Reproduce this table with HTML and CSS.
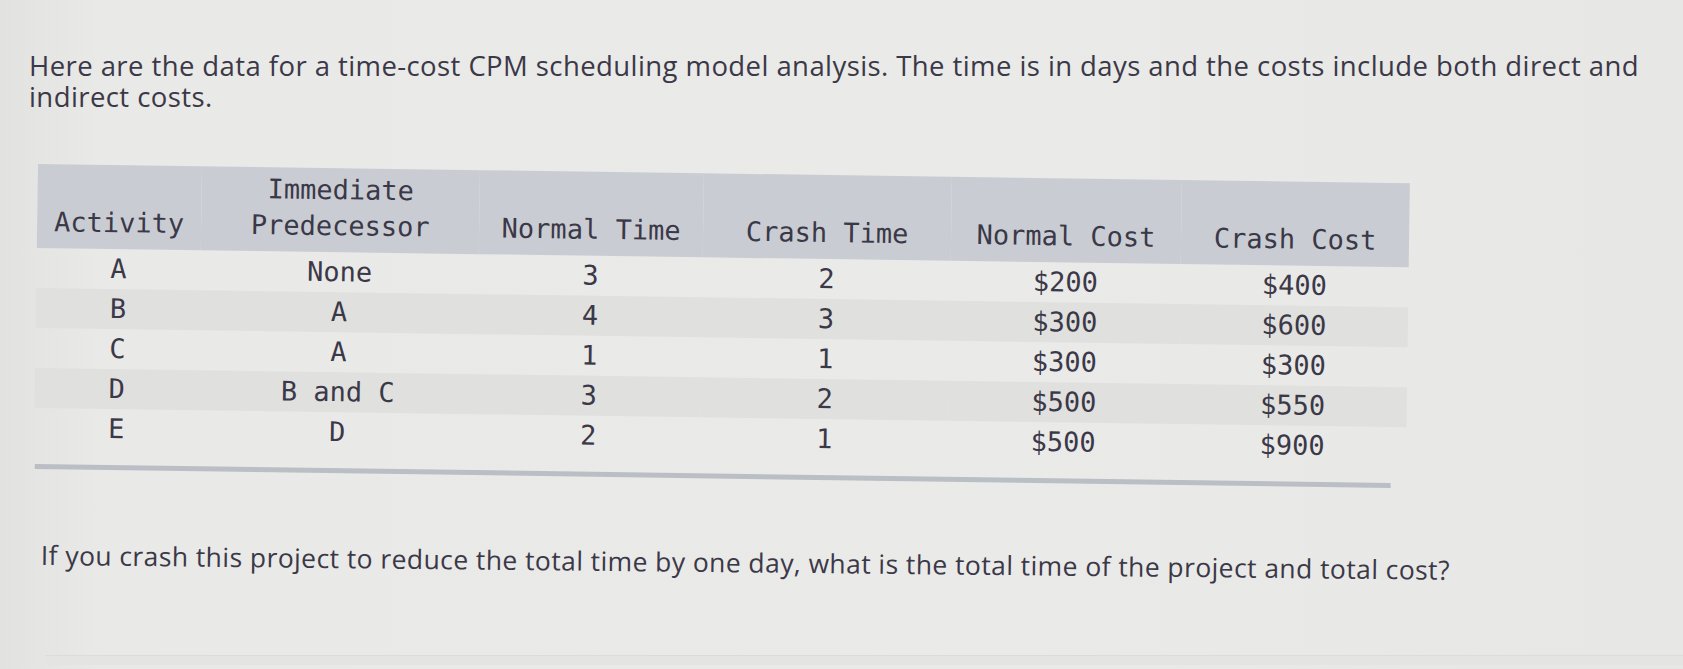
FILE: index.html
```html
<!DOCTYPE html>
<html lang="en">
<head>
<meta charset="utf-8">
<title>Time-cost CPM scheduling</title>
<link rel="stylesheet" href="styles.css">
</head>
<body>
<main class="page">
  <p class="intro">Here are the data for a time-cost CPM scheduling model analysis. The time is in days and the costs include both direct and indirect costs.</p>

  <section class="table-wrap">
    <table class="cpm">
      <colgroup>
        <col class="c1"><col class="c2"><col class="c3"><col class="c4"><col class="c5"><col class="c6">
      </colgroup>
      <thead>
        <tr>
          <th>Activity</th>
          <th>Immediate<br>Predecessor</th>
          <th>Normal Time</th>
          <th>Crash Time</th>
          <th>Normal Cost</th>
          <th>Crash Cost</th>
        </tr>
      </thead>
      <tbody>
        <tr><td>A</td><td>None</td><td>3</td><td>2</td><td>$200</td><td>$400</td></tr>
        <tr class="alt"><td>B</td><td>A</td><td>4</td><td>3</td><td>$300</td><td>$600</td></tr>
        <tr><td>C</td><td>A</td><td>1</td><td>1</td><td>$300</td><td>$300</td></tr>
        <tr class="alt"><td>D</td><td>B and C</td><td>3</td><td>2</td><td>$500</td><td>$550</td></tr>
        <tr><td>E</td><td>D</td><td>2</td><td>1</td><td>$500</td><td>$900</td></tr>
      </tbody>
    </table>
    <div class="rule"></div>
  </section>

  <p class="question">If you crash this project to reduce the total time by one day, what is the total time of the project and total cost?</p>

  <div class="answer-box"></div>
</main>
</body>
</html>
```

FILE: styles.css
```css
html, body {
  margin: 0;
  padding: 0;
}

body {
  width: 1683px;
  height: 669px;
  overflow: hidden;
  background: linear-gradient(90deg, #e2e2e0 0%, #e9e9e7 6%, #eaeae8 60%, #e7e7e5 100%);
  color: #3b3848;
}

.page {
  display: flex;
  flex-direction: column;
  padding: 50px 0 0 29px;
}

.intro {
  margin: 0;
  width: 1645px;
  font-family: "Open Sans", Lato, sans-serif;
  font-size: 27.5px;
  line-height: 31px;
  letter-spacing: 0.42px;
  color: #3b3848;
}

.table-wrap {
  margin: 52px 0 0 9px;
  width: 1372px;
  transform: rotate(0.8deg);
  transform-origin: 0 0;
}

.cpm {
  border-collapse: collapse;
  table-layout: fixed;
  width: 1372px;
  font-family: "DejaVu Sans Mono", "Liberation Mono", monospace;
  font-size: 27px;
  color: #3b3848;
}

.c1 { width: 164px; }
.c2 { width: 278px; }
.c3 { width: 224px; }
.c4 { width: 248px; }
.c5 { width: 230px; }
.c6 { width: 228px; }

.cpm thead tr {
  background: #c9cdd3;
}

.cpm th {
  font-weight: normal;
  text-align: center;
  vertical-align: bottom;
  line-height: 36px;
  padding: 4px 0 8px;
  white-space: nowrap;
}

.cpm td {
  text-align: center;
  height: 40px;
  padding: 0;
  line-height: 40px;
  white-space: pre;
}

.cpm tr.alt {
  background: #e0e0de;
}

.rule {
  margin-top: 16px;
  margin-left: 1px;
  width: 1356px;
  height: 5px;
  background: #babec5;
}

.question {
  margin: 71px 0 0 12px;
  font-family: "Open Sans", Lato, sans-serif;
  font-size: 26.5px;
  line-height: 30px;
  letter-spacing: 0.42px;
  color: #3b3848;
  transform: rotate(0.6deg);
  transform-origin: 0 0;
}

.answer-box {
  margin: 85px 0 0 16px;
  height: 9px;
  background: #e4e5e2;
  border-top: 1px solid #dcdcda;
}
```
